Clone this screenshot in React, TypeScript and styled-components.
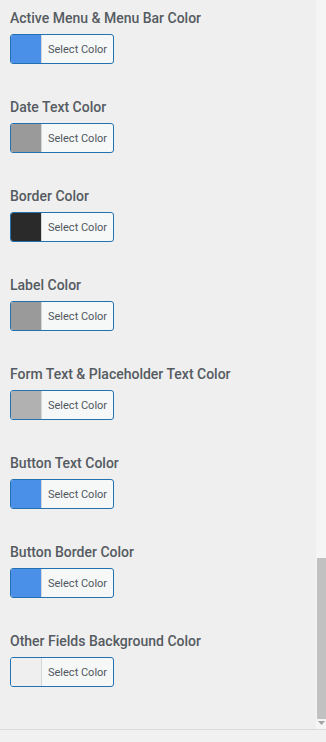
import React from "react"
import styled, { createGlobalStyle } from "styled-components"

const GlobalStyle = createGlobalStyle`
    html, body {
        margin: 0;
        padding: 0;
        background: #efefef;
        font-family: Roboto, "Liberation Sans", Arial, sans-serif;
    }
`

type ColorOption = {
    label: string,
    color: string
}

const options: ColorOption[] = [
    { label: "Active Menu & Menu Bar Color", color: "#4a8fe8" },
    { label: "Date Text Color", color: "#9a9a9a" },
    { label: "Border Color", color: "#2a2a2b" },
    { label: "Label Color", color: "#9a9a9a" },
    { label: "Form Text & Placeholder Text Color", color: "#b1b1b1" },
    { label: "Button Text Color", color: "#4a8fe8" },
    { label: "Button Border Color", color: "#4a8fe8" },
    { label: "Other Fields Background Color", color: "#efefef" },
]

const Screen = styled.div`
    display: flex;
    flex-direction: column;
    height: 742px;
    width: 326px;
    overflow: hidden;
`

const Body = styled.div`
    display: flex;
    height: 729px;
    border-bottom: 1px solid #dcdcdc;
`

const Panel = styled.div`
    flex: 1;
    display: flex;
    flex-direction: column;
    gap: 33px;
    padding: 8px 0 0 10px;
`

const Footer = styled.div`
    flex: 1;
    background: #f1f1f1;
`

const Field = styled.div`
    display: flex;
    flex-direction: column;
    gap: 6px;
`

const Label = styled.div`
    font-size: 14px;
    font-weight: 500;
    line-height: 20px;
    color: #555b61;
    white-space: nowrap;
`

const ColorButton = styled.button`
    display: flex;
    align-items: stretch;
    width: 104px;
    height: 30px;
    padding: 0;
    border: 1px solid #2271b1;
    border-radius: 3px;
    background: #f6f7f7;
    overflow: hidden;
    cursor: pointer;
`

const Swatch = styled.span<{ $color: string }>`
    width: 30px;
    flex-shrink: 0;
    background: ${p => p.$color};
    border-right: 1px solid #d4d6d8;
`

const ButtonText = styled.span`
    display: flex;
    align-items: center;
    padding-left: 6px;
    font-family: Roboto, "Liberation Sans", Arial, sans-serif;
    font-size: 11px;
    color: #50575e;
`

const ScrollTrack = styled.div`
    width: 10px;
    display: flex;
    flex-direction: column;
    background: #f5f5f5;
`

const ScrollSpace = styled.div`
    height: 558px;
`

const ScrollThumb = styled.div`
    height: 161px;
    margin-left: 1px;
    background: #c1c1c1;
`

const ScrollArrow = styled.div`
    display: flex;
    justify-content: center;
    padding-top: 2px;
`

export default function App() {
    return (
        <>
            <GlobalStyle />
            <Screen>
                <Body>
                    <Panel>
                        {options.map(option => (
                            <Field key={option.label}>
                                <Label>{option.label}</Label>
                                <ColorButton type="button">
                                    <Swatch $color={option.color} />
                                    <ButtonText>Select Color</ButtonText>
                                </ColorButton>
                            </Field>
                        ))}
                    </Panel>
                    <ScrollTrack>
                        <ScrollSpace />
                        <ScrollThumb />
                        <ScrollArrow>
                            <svg width="7" height="4" viewBox="0 0 7 4">
                                <path d="M0 0 L7 0 L3.5 4 Z" fill="#a3a3a3" />
                            </svg>
                        </ScrollArrow>
                    </ScrollTrack>
                </Body>
                <Footer />
            </Screen>
        </>
    )
}
